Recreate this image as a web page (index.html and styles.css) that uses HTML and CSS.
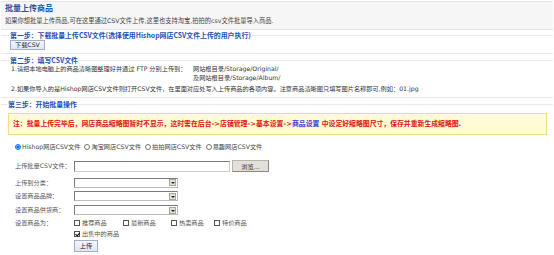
FILE: index.html
```html
<!DOCTYPE html>
<html lang="zh-CN">
<head>
    <meta charset="UTF-8">
    <title>批量上传商品</title>
    <link rel="stylesheet" href="styles.css">
</head>
<body>

    <div class="page-head">
        <h1>批量上传商品</h1>
        <p>如果你想批量上传商品,可在这里通过CSV文件上传,这里也支持淘宝,拍拍的csv文件批量导入商品.</p>
    </div>

    <fieldset class="step step-one">
        <legend>第一步：下载批量上传CSV文件(选择使用Hishop网店CSV文件上传的用户执行)</legend>
        <button class="btn">下载CSV</button>
    </fieldset>

    <fieldset class="step step-two">
        <legend>第二步：填写CSV文件</legend>
        <div class="ftp-row">
            <span class="ftp-label">1.请把本地电脑上的商品清晰图整理好并通过 FTP 分别上传到：</span>
            <span class="ftp-paths">网站根目录/Storage/Original/<br>及网站根目录/Storage/Album/</span>
        </div>
        <p class="csv-tip">2.如果你导入的是Hishop网店CSV文件则打开CSV文件，在里面对应处写入上传商品的各项内容。注意商品清晰图只填写图片名称即可,例如：01.jpg</p>
    </fieldset>

    <fieldset class="step step-three">
        <legend>第三步：开始批量操作</legend>
        <div class="notice">注：批量上传完毕后，网店商品缩略图暂时不显示，这时需在后台-&gt;店铺管理-&gt;基本设置-&gt;<a href="#">商品设置</a> 中设定好缩略图尺寸，保存并重新生成缩略图.</div>

        <div class="source-row">
            <label><input type="radio" name="src" checked> Hishop网店CSV文件</label>
            <label><input type="radio" name="src"> 淘宝网店CSV文件</label>
            <label><input type="radio" name="src"> 拍拍网店CSV文件</label>
            <label><input type="radio" name="src"> 易趣网店CSV文件</label>
        </div>

        <div class="form-grid">
            <span class="form-label">上传批量CSV文件：</span>
            <div class="file-row"><span class="file-box"></span><button class="btn-browse">浏览...</button></div>

            <span class="form-label">上传到分类：</span>
            <div><span class="fake-select"><i></i></span></div>

            <span class="form-label">设置商品品牌：</span>
            <div><span class="fake-select"><i></i></span></div>

            <span class="form-label">设置商品供货商：</span>
            <div><span class="fake-select"><i></i></span></div>

            <span class="form-label">设置商品为：</span>
            <div class="checks">
                <label><span class="box"></span>推荐商品</label>
                <label><span class="box"></span>最新商品</label>
                <label><span class="box"></span>热卖商品</label>
                <label><span class="box"></span>特价商品</label>
            </div>

            <span></span>
            <div class="checks"><label><span class="box checked"></span>出售中的商品</label></div>

            <span></span>
            <div><button class="btn btn-upload">上传</button></div>
        </div>
    </fieldset>

</body>
</html>
```

FILE: styles.css
```css
* {
    margin: 0;
    padding: 0;
    box-sizing: border-box;
}

body {
    background: #fff;
    color: #333;
    font-family: "DejaVu Sans", "Noto Sans CJK SC", sans-serif;
    font-size: 6.2px;
    padding: 1px 1px 0;
}

.page-head {
    background: #f6f6f6;
    border-top: 1px solid #e2e4e6;
    border-bottom: 1px solid #e2e4e6;
    padding: 2px 4px 0;
    height: 29px;
}

.page-head h1 {
    font-size: 8px;
    font-weight: bold;
    color: #2255a4;
    line-height: 10px;
}

.page-head p {
    font-size: 6.25px;
    line-height: 9px;
    margin-top: 2px;
    color: #444;
}

.step {
    border: 1px solid #e6e9ee;
    border-left: none;
    border-right: none;
    padding: 0 9px;
    margin-top: 2px;
}

.step legend {
    font-family: "Noto Sans CJK SC", sans-serif;
    color: #1e50b4;
    font-weight: bold;
    font-size: 6.9px;
    padding: 0 1px;
    margin-left: -1px;
    line-height: 8px;
}

.btn {
    font-family: inherit;
    font-size: 6.2px;
    color: #222;
    background: linear-gradient(#f3f6fb, #dfe7f3);
    border: 1px solid #9fb0c8;
    height: 10px;
    padding: 0 4px;
    line-height: 8px;
}

.step-one {
    margin-top: 1px;
    padding-top: 1px;
    padding-bottom: 3px;
}

.step-two {
    padding-top: 0;
    padding-bottom: 4px;
}

.ftp-row {
    display: flex;
    line-height: 9px;
    padding-left: 1px;
}

.ftp-label {
    width: 182px;
    flex-shrink: 0;
}

.csv-tip {
    line-height: 9px;
    margin-top: 2px;
    padding-left: 1px;
}

.step-three {
    padding: 0 6px 10px 7px;
}

.notice {
    background: #fffbd4;
    border: 1px solid #f4dc8a;
    color: #e0160f;
    font-weight: bold;
    font-size: 6.85px;
    line-height: 20px;
    padding: 0 4px;
    margin-top: 5px;
}

.notice a {
    color: #3b3fd0;
    text-decoration: none;
}

.source-row {
    display: flex;
    gap: 4px;
    margin-top: 7px;
    padding-left: 7px;
    line-height: 9px;
}

.source-row label {
    display: flex;
    align-items: center;
    gap: 1px;
    color: #444;
}

.source-row input {
    width: 6px;
    height: 6px;
    margin: 0;
}

.form-grid {
    display: grid;
    grid-template-columns: 59px 1fr;
    grid-template-rows: 18px 15px 12px 16px 10px 12px 12px;
    margin-top: 6px;
    padding-left: 7px;
    color: #555;
    align-items: center;
}

.form-label {
    line-height: 10px;
}

.file-row {
    display: flex;
    gap: 2px;
    align-items: center;
}

.file-box {
    width: 156px;
    height: 11px;
    border: 1px solid #7a7a7a;
    border-right-color: #ccc;
    border-bottom-color: #ccc;
    background: #fff;
}

.btn-browse {
    font-family: inherit;
    font-size: 6.2px;
    height: 12px;
    width: 37px;
    background: #e3e0d9;
    border: 1px solid #b8b4ab;
    border-right-color: #8c8880;
    border-bottom-color: #8c8880;
    color: #333;
}

.fake-select {
    display: flex;
    justify-content: flex-end;
    align-items: center;
    width: 104px;
    height: 10px;
    border: 1px solid #7a7a7a;
    border-right-color: #bbb;
    border-bottom-color: #bbb;
    background: #fff;
    padding-right: 1px;
}

.fake-select i {
    width: 7px;
    height: 7px;
    background: #e2e0da;
    border: 1px solid #a9a69e;
    position: relative;
}

.fake-select i::after {
    content: "";
    position: absolute;
    left: 1px;
    top: 2px;
    border-left: 2px solid transparent;
    border-right: 2px solid transparent;
    border-top: 2px solid #222;
}

.checks {
    display: flex;
    line-height: 10px;
}

.checks label {
    display: flex;
    align-items: center;
    gap: 2px;
    width: 49px;
}

.checks label:nth-child(2) {
    width: 48px;
}

.checks label:nth-child(3) {
    width: 43px;
}

.box {
    width: 6px;
    height: 6px;
    border: 1px solid #555;
    background: #fff;
    position: relative;
}

.box.checked::after {
    content: "";
    position: absolute;
    left: 1px;
    top: 0;
    width: 2px;
    height: 3px;
    border-right: 1px solid #000;
    border-bottom: 1px solid #000;
    transform: rotate(40deg);
}

.btn-upload {
    height: 12px;
    width: 24px;
    padding: 0;
}
```
